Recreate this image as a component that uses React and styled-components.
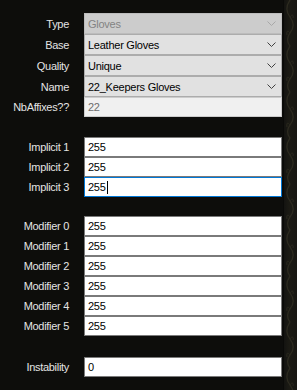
import { Fragment } from "react";
import styled, { createGlobalStyle } from "styled-components";

const GlobalStyle = createGlobalStyle`
  html, body {
    margin: 0;
    padding: 0;
    background: #0d0d0b;
  }
  body {
    font-family: "Liberation Sans", Arial, sans-serif;
  }
`;

const Page = styled.div`
  width: 297px;
  height: 390px;
  display: flex;
  background: #0d0d0b;
  overflow: hidden;
`;

const Main = styled.div`
  flex: 1;
  padding-top: 13px;
  display: flex;
  flex-direction: column;
`;

const Section = styled.div`
  display: grid;
  grid-template-columns: 69px 198px;
  column-gap: 15px;
  margin-top: ${(p) => p.gap || 0}px;
`;

const Label = styled.div`
  height: ${(p) => p.h}px;
  display: flex;
  align-items: center;
  justify-content: flex-end;
  color: #e4e4e4;
  font-size: 11px;
  letter-spacing: -0.3px;
  white-space: nowrap;
`;

const Combo = styled.div`
  box-sizing: border-box;
  height: 21px;
  display: flex;
  align-items: center;
  justify-content: space-between;
  padding: 0 5px 0 3px;
  border: 1px solid ${(p) => (p.disabled ? "#bcbcbc" : "#acacac")};
  background: ${(p) => (p.disabled ? "#cccccc" : "#e1e1e1")};
  color: ${(p) => (p.disabled ? "#838383" : "#000")};
  font-size: 11px;
  letter-spacing: -0.25px;
`;

const Field = styled.div`
  box-sizing: border-box;
  height: 20px;
  display: flex;
  align-items: center;
  padding: 0 3px;
  border: 1px solid
    ${(p) => (p.focused ? "#0078d7" : p.disabled ? "#cccccc" : "#7a7a7a")};
  background: ${(p) => (p.disabled ? "#f0f0f0" : "#ffffff")};
  color: ${(p) => (p.disabled ? "#6d6d6d" : "#000")};
  font-size: 11px;
  letter-spacing: -0.25px;
`;

const Caret = styled.span`
  display: inline-block;
  width: 1px;
  height: 13px;
  background: #000;
  margin-left: 1px;
`;

const Strip = styled.div`
  width: 14px;
  margin-left: 1px;
  background: linear-gradient(90deg, #121210 0%, #1b1a14 45%, #171612 100%);
`;

const Chevron = ({ light }) => (
  <svg width="9" height="5" viewBox="0 0 9 5">
    <path
      d="M0.5 0.5 L4.5 4.5 L8.5 0.5"
      fill="none"
      stroke={light ? "#a8a8a8" : "#404040"}
      strokeWidth="1"
    />
  </svg>
);

const Ornament = () => (
  <svg width="14" height="390" viewBox="0 0 14 390">
    <defs>
      <pattern id="orn" width="14" height="46" patternUnits="userSpaceOnUse">
        <path
          d="M7 0 C3 6 3 12 7 17 C11 22 11 28 7 33 C4 37 4 42 7 46"
          fill="none"
          stroke="#2c2a1f"
          strokeWidth="1.2"
        />
        <path
          d="M7 17 C9 14 11 15 10 18 M7 33 C5 30 3 31 4 35"
          fill="none"
          stroke="#28261c"
          strokeWidth="1"
        />
      </pattern>
    </defs>
    <rect x="1" y="0" width="12" height="390" fill="url(#orn)" />
    <rect x="0" y="0" width="1" height="390" fill="#0a0a08" />
  </svg>
);

const combos = [
  { label: "Type", value: "Gloves", disabled: true },
  { label: "Base", value: "Leather Gloves" },
  { label: "Quality", value: "Unique" },
  { label: "Name", value: "22_Keepers Gloves" },
];

const implicits = ["Implicit 1", "Implicit 2", "Implicit 3"];
const modifiers = [0, 1, 2, 3, 4, 5].map((i) => `Modifier ${i}`);

export default function App() {
  return (
    <>
      <GlobalStyle />
      <Page>
        <Main>
          <Section>
            {combos.map((c) => (
              <Fragment key={c.label}>
                <Label h={21}>{c.label}</Label>
                <Combo disabled={c.disabled}>
                  <span>{c.value}</span>
                  <Chevron light={c.disabled} />
                </Combo>
              </Fragment>
            ))}
            <Label h={20}>NbAffixes??</Label>
            <Field disabled>22</Field>
          </Section>

          <Section gap={20}>
            {implicits.map((name, i) => (
              <Fragment key={name}>
                <Label h={20}>{name}</Label>
                <Field focused={i === 2}>
                  255
                  {i === 2 && <Caret />}
                </Field>
              </Fragment>
            ))}
          </Section>

          <Section gap={19}>
            {modifiers.map((name) => (
              <Fragment key={name}>
                <Label h={20}>{name}</Label>
                <Field>255</Field>
              </Fragment>
            ))}
          </Section>

          <Section gap={21}>
            <Label h={20}>Instability</Label>
            <Field>0</Field>
          </Section>
        </Main>
        <Strip>
          <Ornament />
        </Strip>
      </Page>
    </>
  );
}
